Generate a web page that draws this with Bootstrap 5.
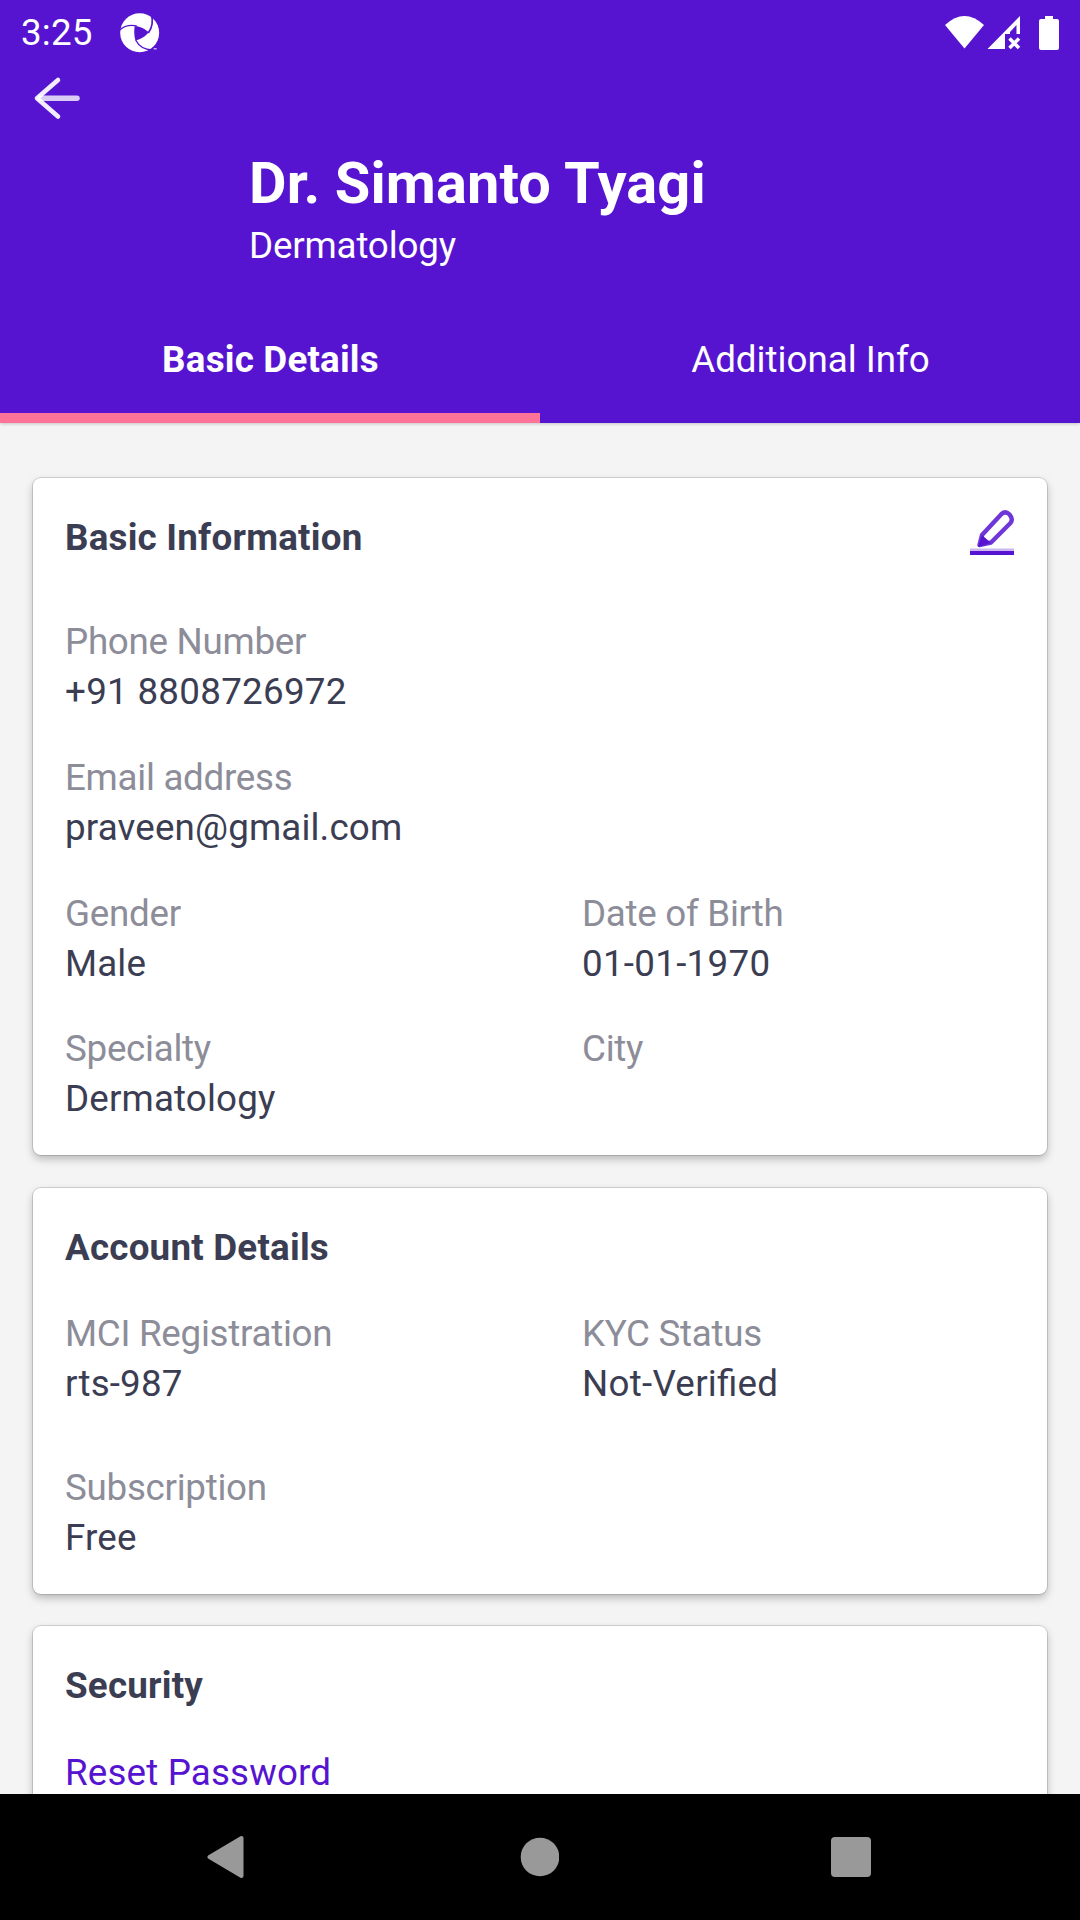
<!DOCTYPE html>
<html lang="en">
<head>
<meta charset="utf-8">
<meta name="viewport" content="width=device-width, initial-scale=1">
<title>Doctor Profile</title>
<link href="https://cdn.jsdelivr.net/npm/bootstrap@5.3.0/dist/css/bootstrap.min.css" rel="stylesheet">
<style>
  body { font-family: Roboto, "Liberation Sans", sans-serif; font-size: 36.75px; line-height: 43px; background: #f4f4f4; color: #3b3d52; height: 1920px; }
  svg { display: block; }
  .app-head { background: #5614d0; color: #fff; height: 423px; box-shadow: 0 1px 3px rgba(0,0,0,.2); }
  .status-bar { height: 65px; padding: 0 20px 0 21px; }
  .clock { letter-spacing: .2px; width: 99px; }
  .back-row { height: 82px; padding: 11px 0 0 33px; }
  .doc-block { padding: 2px 0 0 249px; height: 168px; }
  .doc-name { font-size: 57.75px; line-height: 68px; font-weight: 700; letter-spacing: .1px; margin-bottom: 7px; }
  .doc-field { letter-spacing: -.18px; }
  .tab-row { height: 108px; }
  .tab-item { color: #fff; padding: 23px 0 0 1px; border-bottom: 10px solid transparent; }
  .tab-item.active { font-weight: 700; border-color: #ff7399; letter-spacing: .2px; }
  .page-body { padding: 55px 33px 0; gap: 32.5px; }
  .info-card { background: #fff; border-radius: 8px; padding: 38px 32px 35px; box-shadow: 0 0 0 1px rgba(0,0,0,.13), 0 4px 9px rgba(0,0,0,.25); flex: none; }
  .card-title-row { height: 43px; margin-bottom: 43px; }
  .card-title-row h2 { font-size: 36.75px; line-height: 43px; font-weight: 700; letter-spacing: .22px; margin: 0; }
  .card-title-row.roomy { margin-bottom: 61px; }
  .edit-icon { margin-top: -6px; }
  .field-stack { gap: 42.8px; }
  .field-stack.loose { gap: 61px; }
  .field-cell { width: 517px; height: 93px; flex: none; letter-spacing: .15px; }
  .field-label { color: #8c8d99; margin-bottom: 7px; letter-spacing: -.28px; }
  .wide { letter-spacing: .28px; }
  .ligature { letter-spacing: 0; }
  .link-reset { color: #5614d0; letter-spacing: .15px; }
  .reset-row { padding-top: 1px; }
  .nav-keys { background: #000; height: 126px; padding: 0 209px 0 207px; }
</style>
</head>
<body class="d-flex flex-column overflow-hidden">
<header class="app-head flex-shrink-0 position-relative">
  <div class="status-bar d-flex align-items-center justify-content-between">
    <div class="d-flex align-items-center">
      <span class="clock">3:25</span>
      <svg width="40" height="40" viewBox="360 35 120 120">
        <circle cx="419" cy="94.500" r="58.500" fill="#fff"/>
        <path d="M404 75C418 74 434 82 446 93C436 106 422 115 406 117C402 103 402 88 404 75Z" fill="#5614d0"/>
        <g fill="none" stroke="#5614d0" stroke-width="4">
          <path d="M359 86C374 73 392 70 410 74"/>
          <path d="M453 36C460 58 458 77 445 95" stroke-width="5"/>
          <path d="M407 116C415 132 430 145 457 146"/>
        </g>
        <path d="M461 141H470V144H461Z" fill="#fff"/>
      </svg>
    </div>
    <svg width="115" height="36" viewBox="945 13 115 36" fill="#fff">
      <path d="M945 23Q964.500 5 984 23L964.500 46.500Z"/>
      <path d="M1020 14V32H1016.500V23L1010 30V32H1005V47H987.500Z"/>
      <path d="M1009.500 36.500L1019 46M1019 36.500L1009.500 46" stroke="#fff" stroke-width="3.500"/>
      <path d="M1045 14H1053V17H1057Q1059 17 1059 19V46Q1059 48 1057 48H1041Q1039 48 1039 46V19Q1039 17 1041 17H1045Z"/>
    </svg>
  </div>
  <div class="back-row">
    <svg width="48" height="44" viewBox="33 76 48 44" fill="none" stroke="#fff" stroke-linecap="round">
      <path d="M40 98.300H77" stroke-width="5.500" stroke-opacity=".78"/>
      <path d="M58 80L37 98.300L58 116.500" stroke-width="4.600" stroke-linejoin="round" stroke-opacity=".92"/>
    </svg>
  </div>
  <div class="doc-block">
    <div class="doc-name">Dr. Simanto Tyagi</div>
    <div class="doc-field">Dermatology</div>
  </div>
  <nav class="tab-row d-flex text-center">
    <a class="tab-item active w-50 text-decoration-none">Basic Details</a>
    <a class="tab-item w-50 text-decoration-none">Additional Info</a>
  </nav>
</header>

<main class="page-body d-flex flex-column flex-grow-1 overflow-hidden">
  <section class="info-card">
    <div class="card-title-row roomy d-flex justify-content-between">
      <h2>Basic Information</h2>
      <svg class="edit-icon" width="45" height="45" viewBox="0 0 45 45" fill="none" stroke="#5614d0">
        <path d="M9.500 35L12 25L31.500 4Q35.500 .500 39.500 4.500Q43.500 9 40.500 13L21 32.500Z" stroke-width="4.400" stroke-linejoin="round" stroke-opacity=".85"/>
        <path d="M12 25L21 33L8 37Z" fill="#5614d0" stroke="none"/>
        <path d="M0 40H44" stroke-width="3" stroke-opacity=".3"/>
        <path d="M0 43H44" stroke-width="4"/>
      </svg>
    </div>
    <div class="field-stack d-flex flex-column">
      <div class="field-cell"><div class="field-label">Phone Number</div><div class="wide">+91 8808726972</div></div>
      <div class="field-cell"><div class="field-label">Email address</div><div>praveen@gmail.com</div></div>
      <div class="d-flex">
        <div class="field-cell"><div class="field-label">Gender</div><div>Male</div></div>
        <div class="field-cell"><div class="field-label">Date of Birth</div><div class="wide">01-01-1970</div></div>
      </div>
      <div class="d-flex">
        <div class="field-cell"><div class="field-label">Specialty</div><div>Dermatology</div></div>
        <div class="field-cell"><div class="field-label">City</div></div>
      </div>
    </div>
  </section>

  <section class="info-card">
    <div class="card-title-row"><h2>Account Details</h2></div>
    <div class="field-stack loose d-flex flex-column">
      <div class="d-flex">
        <div class="field-cell"><div class="field-label">MCI Registration</div><div>rts-987</div></div>
        <div class="field-cell"><div class="field-label">KYC Status</div><div class="wide">Not-Veri<span class="ligature">fi</span>ed</div></div>
      </div>
      <div class="field-cell"><div class="field-label">Subscription</div><div>Free</div></div>
    </div>
  </section>

  <section class="info-card">
    <div class="card-title-row"><h2>Security</h2></div>
    <div class="reset-row"><a class="link-reset text-decoration-none">Reset Password</a></div>
  </section>
</main>

<footer class="nav-keys d-flex align-items-center justify-content-between flex-shrink-0 position-relative">
  <svg width="40" height="44" viewBox="0 0 40 44"><path d="M34.500 3V41L2.500 22Z" fill="#999" stroke="#999" stroke-width="4" stroke-linejoin="round"/></svg>
  <svg width="40" height="40" viewBox="0 0 40 40"><circle cx="21" cy="20" r="19.300" fill="#999"/></svg>
  <svg width="40" height="40" viewBox="0 0 40 40"><rect width="40" height="40" rx="4" fill="#999"/></svg>
</footer>
<script src="https://cdn.jsdelivr.net/npm/bootstrap@5.3.0/dist/js/bootstrap.bundle.min.js"></script>
</body>
</html>
